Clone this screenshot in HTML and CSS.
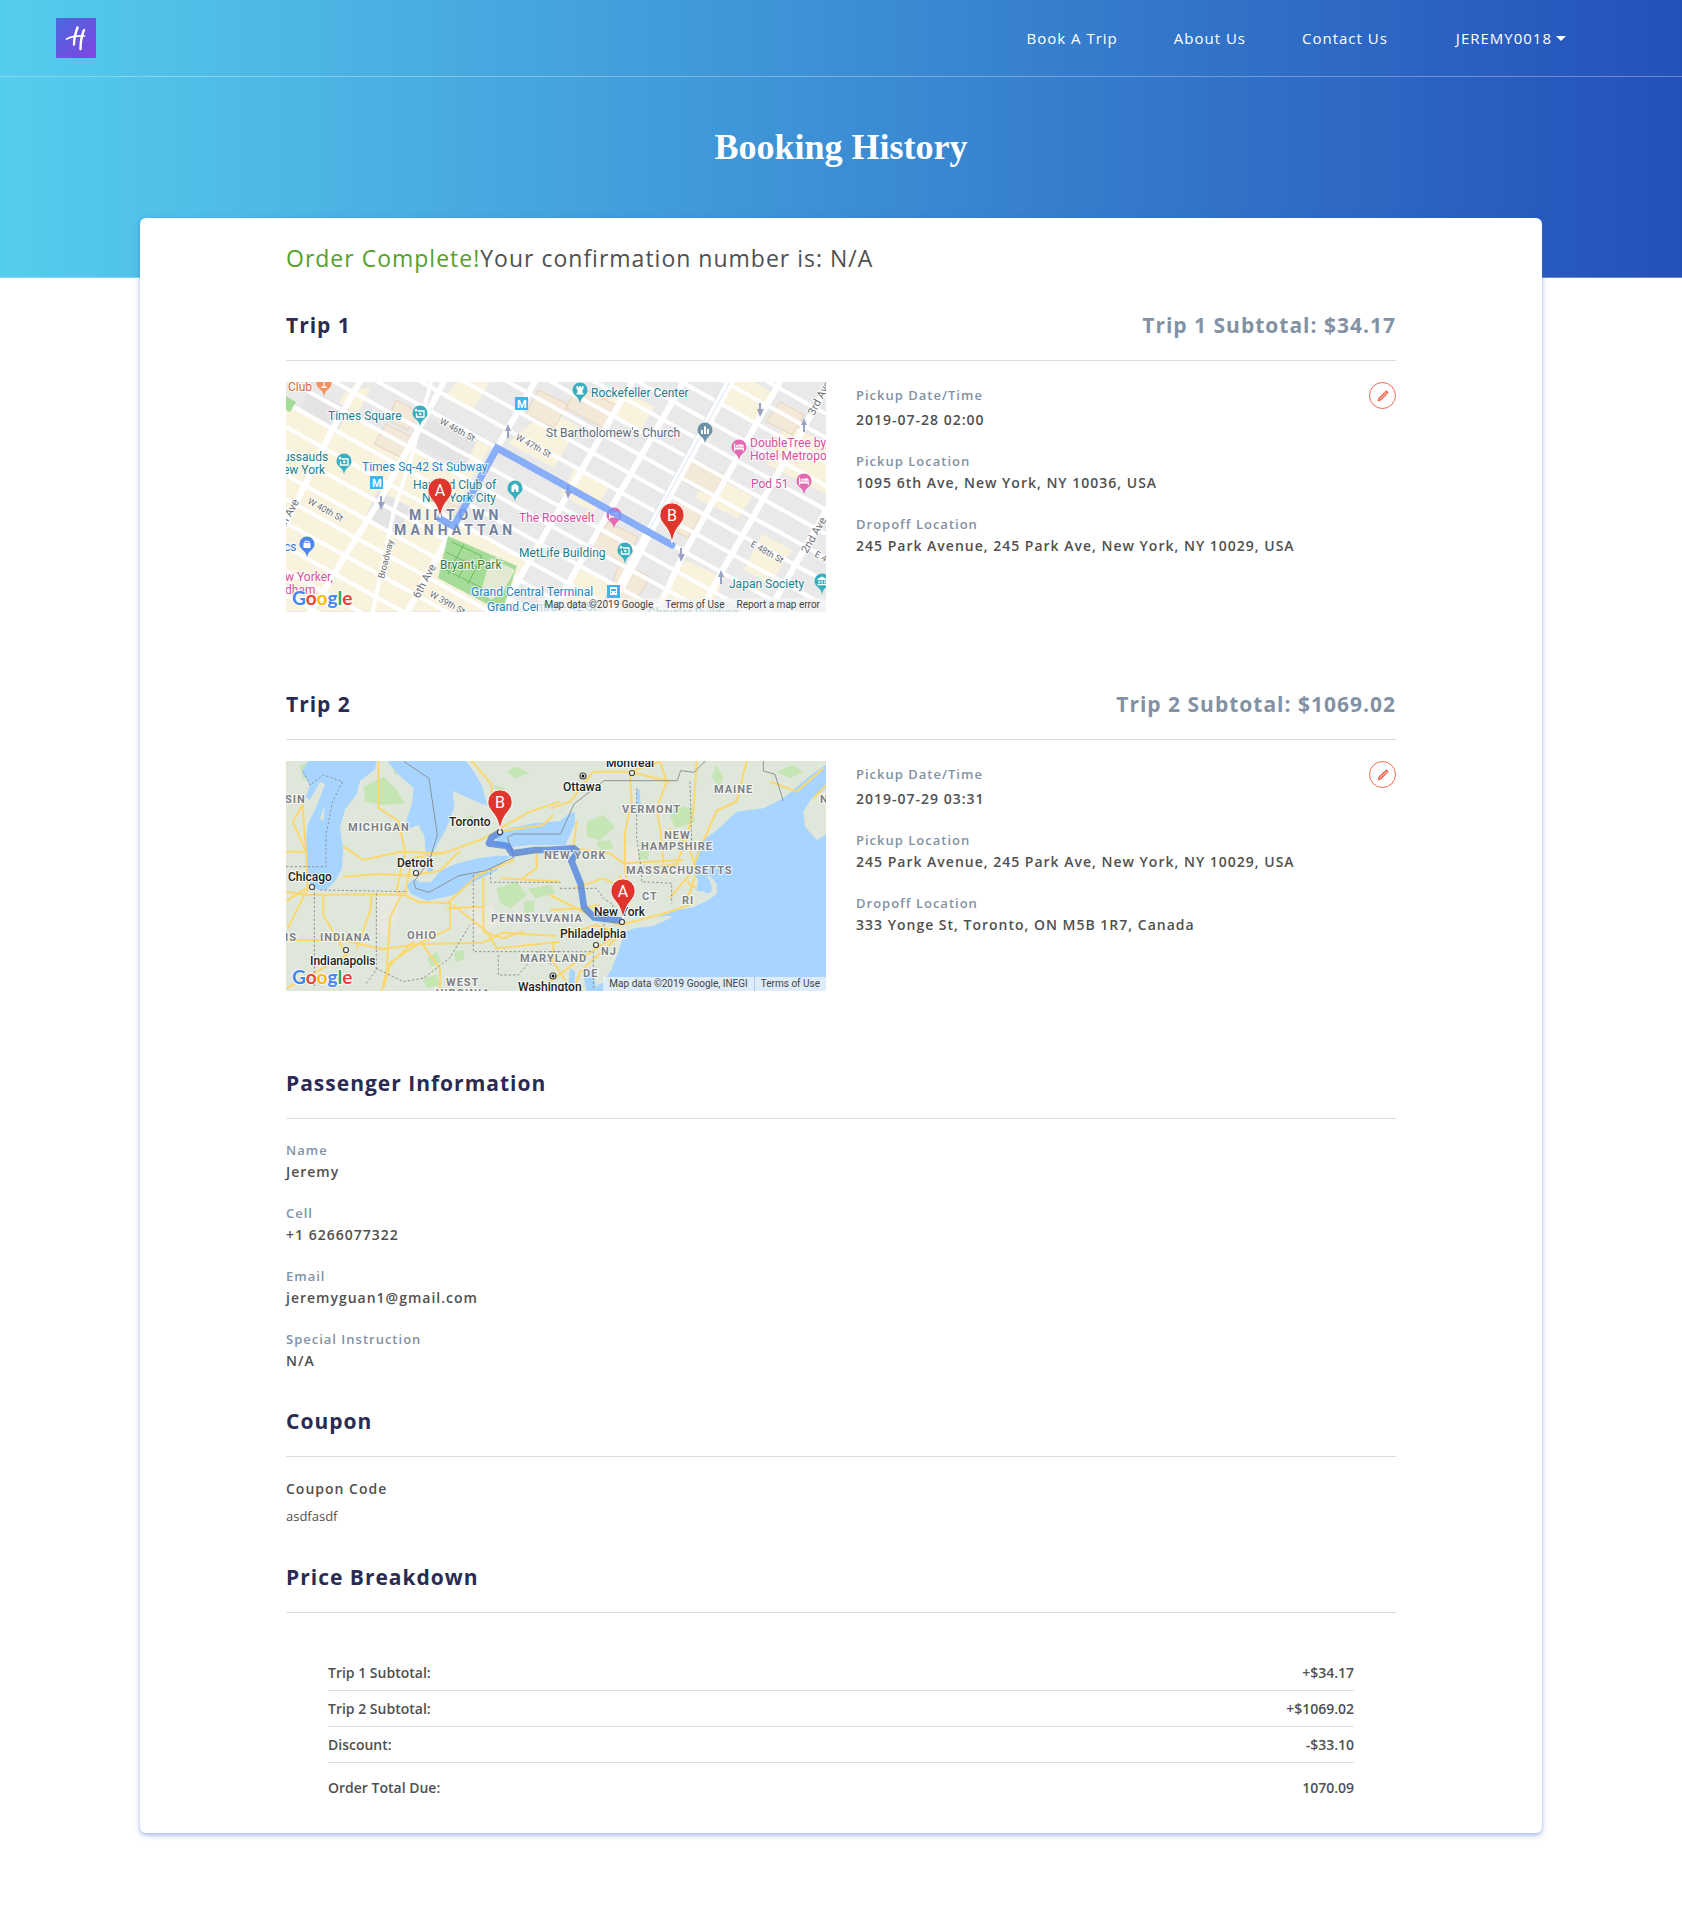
FILE: index.html
```html
<!DOCTYPE html>
<html lang="en">
<head>
<meta charset="utf-8">
<meta name="viewport" content="width=device-width, initial-scale=1">
<title>Booking History</title>
<link rel="stylesheet" href="styles.css">
</head>
<body>
<svg class="defs" width="0" height="0" aria-hidden="true">
  <defs>
    <symbol id="poi" viewBox="0 0 16 22">
      <path fill="currentColor" d="M8 .5a7.5 7.5 0 0 0-7.5 7.7c0 3.2 2 4.8 4.200 6.800C6.500 16.600 7.500 18.500 8 21.500c.5-3 1.500-4.900 3.300-6.500 2.200-2 4.200-3.600 4.200-6.800A7.500 7.500 0 0 0 8 .5z"/>
    </symbol>
    <symbol id="poi-camera" viewBox="0 0 16 22">
      <use href="#poi"/>
      <path fill="none" stroke="#fff" stroke-width="1.300" d="M6 6h6v6H4.500V8.500M2.600 5.300h3M4.100 3.800v3"/>
      <circle cx="8.300" cy="9" r="1.300" fill="#fff"/>
    </symbol>
    <symbol id="poi-castle" viewBox="0 0 16 22">
      <use href="#poi"/>
      <path fill="#fff" d="M4.500 4H6v1.200h1.200V4h1.600v1.200H10V4h1.500v3l-1 1v3h1v1.500h-7V11h1V8l-1-1z"/>
    </symbol>
    <symbol id="poi-bed" viewBox="0 0 16 22">
      <use href="#poi"/>
      <path fill="#fff" d="M3 4.500h1.200v4H13V12h-1.200v-1.600H4.200V12H3zM5 6h1.800v1.800H5zM7.400 5.600h3.800c1 0 1.500.6 1.500 1.400v.8H7.400z"/>
    </symbol>
    <symbol id="poi-house" viewBox="0 0 16 22">
      <use href="#poi"/>
      <path fill="#fff" d="M8 3.500 11.500 6v6H9V9.500H7V12H4.500V6z"/>
    </symbol>
    <symbol id="poi-museum" viewBox="0 0 16 22">
      <use href="#poi"/>
      <path fill="#fff" d="M8 3.500 12.500 6v1h-9V6zM4.500 7.500h1.200v3H4.500zM7.400 7.500h1.200v3H7.400zM10.300 7.500h1.200v3h-1.200zM3.500 11h9v1.200h-9z"/>
    </symbol>
    <symbol id="poi-bars" viewBox="0 0 16 22">
      <use href="#poi"/>
      <path fill="#fff" d="M4 8h2v4H4zM7 4.500h2V12H7zM10 7h2v5h-2z"/>
    </symbol>
    <symbol id="poi-bag" viewBox="0 0 16 22">
      <use href="#poi"/>
      <path fill="#fff" d="M4.500 7h7v5h-7z"/>
      <path fill="none" stroke="#fff" d="M6 7V5.300h4V7"/>
    </symbol>
    <symbol id="poi-food" viewBox="0 0 16 22">
      <use href="#poi"/>
      <path fill="#fff" d="M4 6h8v1H8.600v4.500h2V13H5.400v-1.500h2V7H4z"/>
    </symbol>
    <symbol id="pin" viewBox="0 0 26 42">
      <path fill="#de352c" stroke="#fff" stroke-width="1" d="M13 .8A12.200 12.200 0 0 0 .8 13c0 4.500 2.400 7.300 5 10.500C8.600 27 11.300 31.500 13 41c1.700-9.500 4.400-14 7.200-17.500 2.600-3.200 5-6 5-10.500A12.200 12.200 0 0 0 13 .8z"/>
    </symbol>
    <symbol id="pencil" viewBox="0 0 12 12">
      <path fill="#f0674f" d="M9 .6c1.300 0 2.400 1.100 2.400 2.400L4 10.600.5 11.500l.9-3.500z"/>
      <path fill="none" stroke="#fff" stroke-width=".7" d="M7.600 1.800l2.600 2.600M2.600 9.400l5.600-5.600"/>
    </symbol>
  </defs>
</svg>

<div class="hero">
  <header class="topbar">
    <a class="logo" href="#" aria-label="Home">
      <svg width="40" height="40" viewBox="0 0 40 40">
        <defs><linearGradient id="logo-fill" x1="0" y1="0" x2="1" y2="1"><stop offset="0" stop-color="#4a68dd"/><stop offset="1" stop-color="#8244e2"/></linearGradient></defs>
        <path fill="url(#logo-fill)" d="M0 0h40v40H0z"/>
        <g fill="none" stroke="#fff" stroke-linecap="round">
          <path stroke-width="2.400" d="M21.500 9.500C19.500 15 18 20.500 18 26.500M28 12c-2.500 6-3.500 12-3.500 19"/>
          <path stroke-width="1.700" d="M10.500 21c5-2.500 11-3.500 18-3"/>
        </g>
      </svg>
    </a>
    <nav class="menu">
      <a href="#">Book A Trip</a>
      <a href="#">About Us</a>
      <a href="#">Contact Us</a>
      <button type="button" class="user">JEREMY0018<span class="caret"></span></button>
    </nav>
  </header>
  <h1>Booking History</h1>
</div>

<main class="card">
  <div class="content">
    <p class="status"><span class="done">Order Complete!</span>Your confirmation number is: N/A</p>

    <section class="trip">
      <div class="section-head"><h2>Trip 1</h2><p class="subtotal">Trip 1 Subtotal: $34.17</p></div>
      <div class="trip-body">
        <div class="map">
          <svg class="map-art" viewBox="0 0 540 230" preserveAspectRatio="xMinYMin slice">
            <path fill="#e9e9e9" d="M0 0h540v230H0z"/>
            <path fill="#f9f2dd" d="M0 18 40 40 60 10 85 5 70 35l90 50 18-32 26 12-40 70 80 44-22 50H0z"/>
            <path fill="#f9f2dd" d="M170 0h34l-18 30-28-14zM262 28l30 16-24 42-46-25zM330 5l38 20-12 22-40-20zM290 84l34 18-16 28-34-18zM448 0h20l20 12-16 30-40-20zM500 40l40 22v50l-60-30zM420 90l46 24-14 22-42-20zM400 178l38 18-14 34h-62zM290 185l36 16-16 29h-46zM476 152l30 16-22 34-26-14z"/>
            <path fill="#e4e4e6" d="M144 36l46 24-12 28-50-26zM24 8l40 18-12 22-36-22zM92 108l34 18-16 26-30-18z"/>
            <path fill="#f4e8d8" stroke="#e6d4bf" d="M110 18l22 12-10 18-20-10zM100 42l28 14-12 20-28-14zM252 8l30 14-14 24-28-14zM292 4l40 20-14 22-38-20zM406 76l32 17-12 22-34-18zM392 120l24 12-14 24-22-12zM322 140l30 15-14 26-32-16zM334 180l30 15-20 34h-28zM158 118l20 10-10 18-18-10zM494 20l24 13-12 20-26-14z"/>
            <g fill="none" stroke="#fff" stroke-width="4">
              <path d="M0-267l540 299M0-243l540 299M0-219l540 299M0-195l540 299M0-171l540 299M0-147l540 299M0-123l540 299M0-99l540 299M0-75l540 299M0-51l540 299M0-27l540 299M0-3l540 299M0 21l540 299M0 45l540 299M0 69l540 299M0 93l540 299M0 117l540 299M0 141l540 299M0 165l540 299M0 189l540 299M0 213l540 299"/>
            </g>
            <g fill="none" stroke="#fff" stroke-width="6">
              <path d="M-10 162 44 52 76-4M22 234l72-116 50-92L160-4M119 234l48-88 44-80 40-70M212 234l70-122L348-4M264 234l67-118L400-4M369 234l28-61L496-4M412 234l22-41 87-153L546-4M480 234l64-112"/>
              <path stroke-width="4" d="M86 234l22-106 18-55 20-77"/>
              <path stroke-width="9" d="M319 234l62-118L446-4"/>
            </g>
            <path fill="none" stroke="#dbe6f2" stroke-width="1" d="M362 150 446-4M358 150 441-4"/>
            <path fill="#a5dc98" d="M162 154l69 30-15 46-64-34z"/>
            <path fill="#e4e9d2" d="M205 176l24 12-12 22-12 8-10-10z"/>
            <path fill="none" stroke="#6dc063" d="M166 160l30 14-14 28M160 170l32 16M156 186l40 20M178 162l-16 30M172 196l8-14"/>
            <path fill="#a5dc98" d="M0 14l10 6-6 10-4-2z"/>
            <path fill="#9aa3c4" d="M222 42l3 7h-2v7h-2v-7h-2zM95 128l-3-8h2v-6h2v6h3zM282 117l-3-8h2v-6h2v6h3zM395 180l-3-8h2v-6h2v6h3zM435 188l3 7h-2v7h-2v-7h-2zM518 36l3 7h-2v7h-2v-7h-2zM474 35l-3-8h2v-6h2v6h3z"/>
            <g color="#38aebf">
              <use href="#poi-camera" x="126" y="23" width="16" height="22"/>
              <use href="#poi-camera" x="50" y="71" width="16" height="22"/>
              <use href="#poi-castle" x="286" y="0" width="16" height="22"/>
              <use href="#poi-house" x="221" y="98" width="16" height="22"/>
              <use href="#poi-camera" x="331" y="160" width="16" height="22"/>
              <use href="#poi-museum" x="528" y="191" width="16" height="22"/>
            </g>
            <use href="#poi-food" color="#f4935f" x="30" y="-7" width="16" height="22"/>
            <use href="#poi-bag" color="#4c87ef" x="13" y="154" width="16" height="22"/>
            <use href="#poi-bars" color="#6d93a8" x="411" y="40" width="16" height="22"/>
            <g color="#e468b2">
              <use href="#poi-bed" x="445" y="57" width="16" height="22"/>
              <use href="#poi-bed" x="510" y="91" width="16" height="22"/>
              <use href="#poi-bed" x="320" y="125" width="16" height="22"/>
            </g>
            <g class="metro">
              <path fill="#3fb4ef" d="M229 15h13v13h-13zM84 94h13v13H84zM321 203h13v13h-13z"/>
              <text class="metro-m" x="231" y="26">M</text>
              <text class="metro-m" x="86" y="105">M</text>
              <path fill="#fff" d="M324 205h7v8h-7z"/>
              <path fill="#3fb4ef" d="M325 207h5v2h-5zM325 210h1v1h-1zM329 210h1v1h-1z"/>
            </g>
            <g class="street">
              <text transform="translate(153 41) rotate(29)">W 46th St</text>
              <text transform="translate(229 57) rotate(29)">W 47th St</text>
              <text transform="translate(21 121) rotate(29)">W 40th St</text>
              <text transform="translate(143 214) rotate(29)">W 39th St</text>
              <text transform="translate(464 164) rotate(29)">E 48th St</text>
              <text transform="translate(528 174) rotate(29)">E 47th St</text>
              <text transform="translate(98 197) rotate(-76)">Broadway</text>
              <text class="avenue" transform="translate(133 217) rotate(-62)">6th Ave</text>
              <text class="avenue" transform="translate(528 34) rotate(-62)">3rd Ave</text>
              <text class="avenue" transform="translate(521 172) rotate(-60)">2nd Ave</text>
              <text class="avenue" transform="translate(-4 152) rotate(-62)">7th Ave</text>
            </g>
            <g class="area"><text x="123" y="138">MIDTOWN</text><text x="108" y="153">MANHATTAN</text></g>
            <path class="route" d="M154 137l13 7q2-2 3-4l41-74 175 97"/>
            <g class="place">
              <g fill="#c46a3f"><text x="2" y="9">Club</text></g>
              <g fill="#1c7e8b">
                <text x="42" y="38">Times Square</text>
                <text x="-3" y="79">ussauds</text><text x="-3" y="92">ew York</text>
                <text x="305" y="15">Rockefeller Center</text>
                <text x="127" y="107">Harvard Club of</text><text x="136" y="120">New York City</text>
                <text x="233" y="175">MetLife Building</text>
                <text x="443" y="206">Japan Society</text>
                <text x="362" y="235">Chrysler Building</text>
              </g>
              <g fill="#1f85c4">
                <text x="76" y="89">Times Sq-42 St Subway</text>
                <text x="185" y="214">Grand Central Terminal</text>
                <text x="201" y="229">Grand Central - 42 St</text>
              </g>
              <g fill="#5b6b78"><text x="260" y="55">St Bartholomew's Church</text></g>
              <g fill="#d94f9f">
                <text x="464" y="65">DoubleTree by</text><text x="464" y="78">Hotel Metropolitan</text>
                <text x="465" y="106">Pod 51</text>
                <text x="233" y="140">The Roosevelt</text>
                <text x="-1" y="199">w Yorker,</text><text x="-1" y="212">dham</text>
              </g>
              <g fill="#3c74cf"><text x="-2" y="169">cs</text></g>
              <g fill="#34803a"><text x="154" y="187">Bryant Park</text></g>
            </g>
            <use href="#pin" x="141" y="95" width="26" height="42"/>
            <use href="#pin" x="373" y="120" width="26" height="42"/>
            <text class="pin-letter" x="154" y="114">A</text>
            <text class="pin-letter" x="386" y="139">B</text>
            <text class="google" x="6" y="223"><tspan fill="#4285f4">G</tspan><tspan fill="#ea4335">o</tspan><tspan fill="#fbbc05">o</tspan><tspan fill="#4285f4">g</tspan><tspan fill="#34a853">l</tspan><tspan fill="#ea4335">e</tspan></text>
          </svg>
          <div class="credit"><span>Map data ©2019 Google</span><a href="#">Terms of Use</a><a href="#">Report a map error</a></div>
        </div>
        <div class="details">
          <dl class="facts">
            <div class="when"><dt>Pickup Date/Time</dt><dd>2019-07-28 02:00</dd></div>
            <div><dt>Pickup Location</dt><dd>1095 6th Ave, New York, NY 10036, USA</dd></div>
            <div><dt>Dropoff Location</dt><dd>245 Park Avenue, 245 Park Ave, New York, NY 10029, USA</dd></div>
          </dl>
          <button type="button" class="edit" aria-label="Edit trip 1"><svg width="12" height="12"><use href="#pencil"/></svg></button>
        </div>
      </div>
    </section>

    <section class="trip">
      <div class="section-head"><h2>Trip 2</h2><p class="subtotal">Trip 2 Subtotal: $1069.02</p></div>
      <div class="trip-body">
        <div class="map">
          <svg class="map-art" viewBox="0 0 540 230" preserveAspectRatio="xMinYMin slice">
            <path fill="#dfe6da" d="M0 0h540v230H0z"/>
            <g transform="scale(.33333) translate(-18 -18)">
              <g fill="#c5e5b4">
                <path d="M250 95l60-30 40 40 25 40-70 5-50-10zM335 30l30-5 5 25-25 10zM650 400l60-20 30 40-50 40-30-15zM745 400l70-10 10 25-60 15zM730 440l35-5-5 35-25 5zM440 610l30-20 15 30-30 15zM430 670l40-10 10 30-40 10zM525 590l30-5-5 30-25 5zM550 190l30-10 5 20-25 10zM680 50l30-15 35 20-40 15zM640 90l35 10-10 30zM60 30l50-12 10 40-50 15z"/>
                <path d="M920 200l50-20 35 35-45 40-40-10zM950 260l40-5 10 25-40 5zM1190 150l45 10 10 40-60 20-15-40zM1080 260l30 5-5 50-30-5zM1310 30l20 40-15 25-20-30zM1490 50l50-20 30 20-40 20zM900 90l35-10 5 25-35 5z"/>
              </g>
              <g fill="#e8e8df"><path d="M290 415l70 10-5 60-40 60-25-20zM560 460l80-10 20 60-70 30zM1040 270l40 5-10 60-40-10z"/></g>
              <g fill="#a8d5ff">
                <path d="M85 18h205l-5 25-45 35-10 40-35 45-15 55 10 70-5 55-20 35-25 27h-25l-25-17-10-60-2-70 5-50 25-50 27-70-15-8-30 55-12-10 12-35-25-40z"/>
                <path d="M322 18h236l22 30 25 42 18 62-30-10-75-35 5 50-25 65-25 45-20 40-15-5-5-60-18-32-25 10-12-20 18-55 5-45-50-45z"/>
                <path d="M440 330l15-5 5 20-15 15zM402 372l20 10 30 0 30-35 50-22 60-15 60-8 40 0-45 47-60 28-68 43-78 18-48-22-14-26z"/>
                <path d="M655 240l25-18 80-17 80-7 25-20 20-8 0 35-28 65-107 0-70 8-35-10z"/>
                <path d="M1510 130l-60 30-80 10-65 60-45 30-15 55-5 40 15 20-5 30 25 12 20-5 0-30-15-15 10-5 20 25 0 30-20 15-50 25-60 10-90 40-55 25-20 60-20 50-25 40-25 15 20 40h690V230l-45 25-35-40-5-45 25-40 60-40V18l-60 40z"/>
                <path d="M1068 110l10-10 5 60-10 25zM870 640l15 10-2 60h-20zM910 660l30-15 10 65h-30z"/>
              </g>
              <g fill="#dfe6da">
                <path d="M1040 512l120-30 20 3-60 28-80 10zM1265 405l20 14 15-15-12-30 8 2 15 35-25 18-24-8zM120 190l15-40-5 50zM1480 130l15-10 8 10-12 8z"/>
              </g>
              <g fill="none" stroke="#fbd86e" stroke-width="6" stroke-linejoin="round">
                <path d="M295 18v140l60 40 20 90-25 120 15 10-35 70-10 160-15 60-70 100M18 290l60 0-10-140-30 50 40 90 5 110-60 120M18 410l65 10 220-2 70 2 40 20 90 5 90-85 110-45M18 555h170l120 28 100-15 200-5 60-30 160 10M130 420l0 60 70 120-180 100M190 275l60 40 110-25 130 5 110-40 50-25 140-20 30-30M190 365l110-8 90 5 90-15 60-60M375 420l20-110 110-20M275 420l-5 50-40 110M510 440l0 80-100 50-90 60M420 560l60 80 0 60M500 460l110-5 0-90M610 380v150l60 20 60-20M660 370l180 10M700 300l70-10 0 50-50 35M520 450l100 80 30 50 190-20M575 18l60 70 0 60 25 60M660 220l90-50 90-30M400 560l-70 70-20 70M18 440l60-40"/>
                <path d="M810 160l60-20 70-90 110 0 90-30M1050 60l5 80-20 90 0 120 10 40M890 200l-10 80 110 15 40 30 180-10M1140 20l20 60-30 80 10 60 15 140M1250 18l-10 150-20 80-30 80-80 10M1400 18l-30 120-60 30-40 90-40 100-60 70M1165 220l60 50 25 80-30 90M1030 400l-60-30-90 30M810 420l120 60 90 30 150-40 70-25M850 540l100-30 70 30-120 110-20 60M820 560v60l50 80M960 450l-60 10-90 5M1220 380l30 20M1020 440v-80M1050 50l120 30M1470 80l80 30 80-70M1600 130l60-60M810 680l80-60 120-80"/>
              </g>
              <g fill="none" stroke="#8c9298" stroke-width="3">
                <path d="M372 20l75 50 25 170-25 80-45 60 5 20 40 12 90-50 80-15 85-40-20-60 20-10h140l40-90 90-70h220l10-30 40 5 60-60M1450 18l0 30 35 10 25 80"/>
                <path stroke-dasharray="7 6" d="M70 50l20 40 40-30 58 20-30 60-20 100v95H18M103 400v300M120 405l262 5M289 415v230l-30 40M289 640l80 40 60-10 80-60 60-100M580 360v230h260M632 340v42h210M840 400l110 0 20 30 30 20-30 50 10 50M1070 100v150l15 100 0 30 90 5 0 60M1230 80l5 180-25 30M1080 335h150M940 700V590H810M655 600v60l60 0 60-70 40 40"/>
              </g>
              <path fill="none" stroke="#4d82e2" stroke-opacity=".78" stroke-width="20" stroke-linecap="round" stroke-linejoin="round" d="M660 232l-25 15-8 18 55 8 15 22 70-10 35 0 80-5 12 12-20 25 28 70 10 70 30 30 80 10"/>
            </g>
            <g fill="#fff" stroke="#444" stroke-width="1.200"><circle cx="26" cy="126" r="2.500"/><circle cx="130" cy="112" r="2.500"/><circle cx="60" cy="189" r="2.500"/><circle cx="214" cy="71" r="2.500"/><circle cx="346" cy="12" r="2.500"/><circle cx="310" cy="184" r="2.500"/><circle cx="336" cy="161" r="2.500"/><circle cx="297" cy="15" r="3"/><circle cx="267" cy="215" r="3"/></g>
            <circle cx="297" cy="15" r="1.500"/><circle cx="267" cy="215" r="1.500"/>
            <g class="state">
              <text x="-1" y="42">SIN</text><text x="62" y="70">MICHIGAN</text><text x="34" y="180">INDIANA</text><text x="-1" y="180">IS</text><text x="121" y="178">OHIO</text>
              <text x="205" y="161">PENNSYLVANIA</text><text x="258" y="98">NEW YORK</text><text x="336" y="52">VERMONT</text><text x="428" y="32">MAINE</text><text x="378" y="78">NEW</text><text x="355" y="89">HAMPSHIRE</text><text x="340" y="113">MASSACHUSETTS</text><text x="356" y="139">CT</text><text x="396" y="143">RI</text><text x="315" y="194">NJ</text><text x="234" y="201">MARYLAND</text><text x="297" y="216">DE</text><text x="160" y="225">WEST</text><text x="150" y="236">VIRGINIA</text><text x="534" y="42">NB</text>
            </g>
            <g class="city">
              <text x="2" y="120">Chicago</text><text x="111" y="106">Detroit</text><text x="24" y="204">Indianapolis</text><text x="163" y="65">Toronto</text><text x="277" y="30">Ottawa</text><text x="320" y="6">Montreal</text><text x="308" y="155">New York</text><text x="274" y="177">Philadelphia</text><text x="232" y="230">Washington</text>
            </g>
            <use href="#pin" x="201" y="28" width="26" height="42"/>
            <use href="#pin" x="324" y="117" width="26" height="42"/>
            <text class="pin-letter" x="214" y="47">B</text>
            <text class="pin-letter" x="337" y="136">A</text>
            <text class="google" x="6" y="223"><tspan fill="#4285f4">G</tspan><tspan fill="#ea4335">o</tspan><tspan fill="#fbbc05">o</tspan><tspan fill="#4285f4">g</tspan><tspan fill="#34a853">l</tspan><tspan fill="#ea4335">e</tspan></text>
          </svg>
          <div class="credit split"><span>Map data ©2019 Google, INEGI</span><a href="#">Terms of Use</a></div>
        </div>
        <div class="details">
          <dl class="facts">
            <div class="when"><dt>Pickup Date/Time</dt><dd>2019-07-29 03:31</dd></div>
            <div><dt>Pickup Location</dt><dd>245 Park Avenue, 245 Park Ave, New York, NY 10029, USA</dd></div>
            <div><dt>Dropoff Location</dt><dd>333 Yonge St, Toronto, ON M5B 1R7, Canada</dd></div>
          </dl>
          <button type="button" class="edit" aria-label="Edit trip 2"><svg width="12" height="12"><use href="#pencil"/></svg></button>
        </div>
      </div>
    </section>

    <section class="block">
      <div class="section-head"><h2>Passenger Information</h2></div>
      <dl class="facts">
        <div><dt>Name</dt><dd>Jeremy</dd></div>
        <div><dt>Cell</dt><dd>+1 6266077322</dd></div>
        <div><dt>Email</dt><dd>jeremyguan1@gmail.com</dd></div>
        <div><dt>Special Instruction</dt><dd>N/A</dd></div>
      </dl>
    </section>

    <section class="block">
      <div class="section-head"><h2>Coupon</h2></div>
      <h3>Coupon Code</h3>
      <p class="code">asdfasdf</p>
    </section>

    <section>
      <div class="section-head"><h2>Price Breakdown</h2></div>
      <div class="prices">
        <table>
          <tbody>
            <tr><th scope="row">Trip 1 Subtotal:</th><td>+$34.17</td></tr>
            <tr><th scope="row">Trip 2 Subtotal:</th><td>+$1069.02</td></tr>
            <tr><th scope="row">Discount:</th><td>-$33.10</td></tr>
          </tbody>
          <tfoot>
            <tr><th scope="row">Order Total Due:</th><td>1070.09</td></tr>
          </tfoot>
        </table>
      </div>
    </section>
  </div>
</main>
</body>
</html>
```
FILE: styles.css
```css
* { box-sizing: border-box; }

body {
  margin: 0;
  background: #fff;
  color: #505050;
  font: 14px/21px "Open Sans", "Noto Sans", sans-serif;
}

h1, h2, h3, p, dl, dd { margin: 0; }
.defs { display: block; }

.hero {
  height: 278px;
  background: linear-gradient(to right, #55cdee, #2450ba);
  border-bottom: 1px solid rgba(255, 255, 255, .3);
}

.topbar {
  display: flex;
  align-items: center;
  justify-content: space-between;
  height: 77px;
  padding: 0 116px 0 56px;
  border-bottom: 1px solid rgba(255, 255, 255, .3);
}

.logo svg { display: block; }

.menu {
  display: flex;
  align-items: center;
  gap: 56px;
  color: #fff;
}

.menu a {
  color: inherit;
  font-size: 15px;
  letter-spacing: 1px;
  text-decoration: none;
}

.user {
  display: flex;
  align-items: center;
  gap: 4px;
  margin-left: 12px;
  padding: 0;
  border: 0;
  background: none;
  color: inherit;
  font: inherit;
  font-size: 15px;
  letter-spacing: 1px;
}

.caret {
  border: 5px solid transparent;
  border-top-color: #fff;
  border-bottom: 0;
}

h1 {
  margin-top: 48px;
  color: #fff;
  font: bold 36px/44px "Liberation Serif", serif;
  text-align: center;
}

.card {
  position: relative;
  width: 83.3333%;
  margin: -60px auto 84px;
  padding: 22px 24px 35px;
  border-radius: 6px;
  background: #fff;
  box-shadow: 0 2px 4px rgba(60, 100, 200, .4), 0 2px 10px rgba(60, 100, 200, .12);
}

.content {
  max-width: 1110px;
  margin: 0 auto;
}

.status {
  margin-bottom: 34px;
  font-size: 23px;
  line-height: 36px;
  letter-spacing: 1px;
}

.done { color: #56a02c; }

.section-head {
  display: flex;
  justify-content: space-between;
  margin-bottom: 21px;
  padding-bottom: 20px;
  border-bottom: 1px solid #dcdde3;
}

h2, .subtotal {
  font-size: 21px;
  font-weight: 700;
  line-height: 30px;
  letter-spacing: 1px;
}

h2 { color: #2b2b52; }
.subtotal { color: #8292a4; }

.trip { margin-bottom: 77px; }
.block { margin-bottom: 35px; }

.trip-body {
  display: grid;
  grid-template-columns: 1fr 1fr;
  gap: 30px;
}

.map {
  position: relative;
  height: 230px;
  overflow: hidden;
}

.map-art {
  display: block;
  width: 100%;
  height: 230px;
  font-family: Roboto, sans-serif;
}

.map-art text {
  paint-order: stroke;
  stroke: rgba(255, 255, 255, .8);
  stroke-width: 2px;
}

.place { font-size: 12px; }

.city {
  font-size: 12px;
  font-weight: 500;
  fill: #222;
}

.state {
  font-size: 11px;
  font-weight: 700;
  letter-spacing: 1px;
  fill: #7c7f86;
}

.area {
  font-size: 14px;
  font-weight: 700;
  letter-spacing: 4px;
  fill: #74829c;
}

.street { font-size: 9px; fill: #6b6f74; }
.street .avenue { font-size: 11px; }

.route {
  fill: none;
  stroke: #6c9bfa;
  stroke-opacity: .8;
  stroke-width: 7;
  stroke-linecap: round;
}

.map-art .metro-m {
  fill: #fff;
  stroke: none;
  font-size: 11px;
  font-weight: 700;
}

.map-art .pin-letter {
  fill: #fff;
  stroke: none;
  font: 16px Roboto, sans-serif;
  text-anchor: middle;
}

.google { font: bold 19px Lato, sans-serif; }

.credit {
  position: absolute;
  right: 0;
  bottom: 0;
  display: flex;
  background: rgba(245, 245, 245, .7);
  color: #444;
  font: 10px/14px Roboto, sans-serif;
}

.credit a { color: inherit; text-decoration: none; }
.credit > * { padding: 0 6px; }
.split > :last-child { border-left: 1px solid #a8c8e8; }

.details {
  display: flex;
  align-items: flex-start;
  justify-content: space-between;
}

.facts {
  display: grid;
  gap: 21px;
  font-weight: 600;
  letter-spacing: 1px;
}

.details .facts { padding-top: 3px; }

.facts dt {
  color: #8292a4;
  font-size: 13px;
}

.when dt { margin-bottom: 3px; }

.edit {
  display: grid;
  flex: none;
  place-items: center;
  width: 27px;
  height: 27px;
  padding: 0;
  border: 1px solid #f0674f;
  border-radius: 50%;
  background: none;
}

h3 {
  margin-bottom: 7px;
  font-size: 14px;
  font-weight: 600;
  line-height: 21px;
  letter-spacing: 1px;
}

.code { font-size: 13px; }

.prices { padding: 21px 42px 0; }

table {
  width: 100%;
  border-collapse: collapse;
  font-weight: 600;
}

th, td {
  padding: 7px 0;
  font-weight: inherit;
  text-align: left;
}

td { text-align: right; }
tbody tr { border-bottom: 1px solid #dcdde3; }
tfoot th, tfoot td { padding: 14px 0 0; }
```
